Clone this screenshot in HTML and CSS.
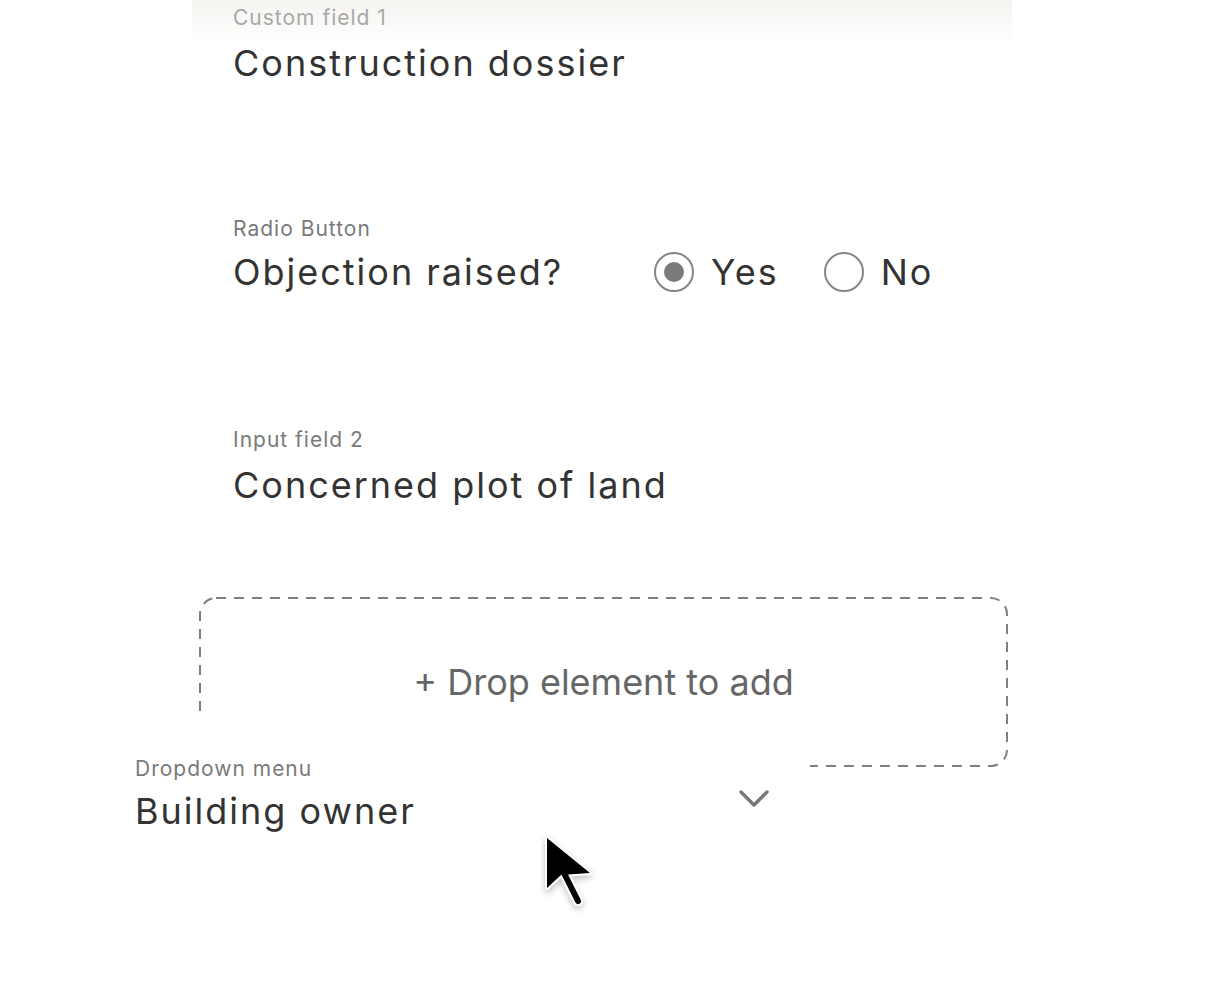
FILE: index.html
```html
<!DOCTYPE html>
<html lang="en">
<head>
<meta charset="utf-8">
<title>Form builder</title>
<link rel="stylesheet" href="styles.css">
</head>
<body>
<div class="canvas">
  <div class="form">
    <div class="fade"></div>
    <div class="field">
      <div class="label label-faded">Custom field 1</div>
      <div class="value">Construction dossier</div>
    </div>
    <div class="field">
      <div class="label">Radio Button</div>
      <div class="value row">
        <span class="question">Objection raised?</span>
        <span class="radio-group">
          <span class="option"><span class="radio checked"></span>Yes</span>
          <span class="option"><span class="radio"></span>No</span>
        </span>
      </div>
    </div>
    <div class="field">
      <div class="label">Input field 2</div>
      <div class="value">Concerned plot of land</div>
    </div>
    <div class="dropzone">
      <svg class="dash" width="100%" height="100%" preserveAspectRatio="none">
        <rect x="1" y="1" width="807" height="168" rx="16" ry="16" fill="none" stroke="#7f7f7f" stroke-width="2" stroke-dasharray="10 8"/>
      </svg>
      <span class="drop-text">+ Drop element to add</span>
    </div>
  </div>

  <div class="drag-card">
    <div class="label">Dropdown menu</div>
    <div class="value drop-row">
      <span>Building owner</span>
      <svg class="chevron" width="32" height="20" viewBox="0 0 32 20"><polyline points="3,3 16,16 29,3" fill="none" stroke="#787878" stroke-width="3.4" stroke-linecap="round" stroke-linejoin="round"/></svg>
    </div>
  </div>

  <svg class="cursor" width="70" height="90" viewBox="0 0 70 90">
    <defs>
      <filter id="sh" x="-50%" y="-50%" width="200%" height="200%">
        <feDropShadow dx="0" dy="3" stdDeviation="3" flood-color="#000" flood-opacity="0.25"/>
      </filter>
    </defs>
    <g filter="url(#sh)">
      <line x1="25" y1="45" x2="38" y2="71" stroke="#fff" stroke-width="10" stroke-linecap="round"/>
      <path d="M7 8 L7 58 L21 45 L50 43 Z" fill="#fff" stroke="#fff" stroke-width="4" stroke-linejoin="round"/>
      <line x1="25" y1="45" x2="38" y2="71" stroke="#000" stroke-width="6" stroke-linecap="round"/>
      <path d="M7 8 L7 58 L21 45 L50 43 Z" fill="#000"/>
    </g>
  </svg>
</div>
</body>
</html>
```

FILE: styles.css
```css
html, body {
  margin: 0;
  padding: 0;
  background: #ffffff;
}

body {
  font-family: Inter, "Noto Sans", "Liberation Sans", sans-serif;
  color: #333333;
}

.canvas {
  position: relative;
  width: 1215px;
  height: 1000px;
  overflow: hidden;
}

.form {
  position: relative;
  width: 820px;
  margin-left: 192px;
  padding-top: 6px;
  display: flex;
  flex-direction: column;
}

.fade {
  position: absolute;
  left: 0;
  top: 0;
  width: 820px;
  height: 46px;
  background: linear-gradient(to bottom, rgba(242, 240, 236, 0.75), rgba(255, 255, 255, 0));
  pointer-events: none;
}

.field {
  position: relative;
  padding-left: 41px;
  margin-bottom: 132px;
}

.field:nth-child(3) {
  margin-bottom: 134px;
}

.label {
  font-size: 21px;
  line-height: 24px;
  color: #7a7a7a;
  letter-spacing: 1px;
}

.label-faded {
  color: #a8a8a8;
}

.value {
  margin-top: 11px;
  font-size: 36px;
  line-height: 44px;
  letter-spacing: 2px;
  color: #333333;
}

.row {
  margin-top: 9px;
  display: flex;
  align-items: center;
}

.question {
  width: 421px;
}

.radio-group {
  display: flex;
  align-items: center;
  gap: 45px;
}

.option {
  display: flex;
  align-items: center;
  gap: 17px;
}

.radio {
  box-sizing: border-box;
  width: 40px;
  height: 40px;
  border: 2px solid #858585;
  border-radius: 50%;
  display: flex;
  align-items: center;
  justify-content: center;
}

.radio.checked::after {
  content: "";
  width: 20px;
  height: 20px;
  border-radius: 50%;
  background: #7a7a7a;
}

.dropzone {
  position: relative;
  margin: -42px 4px 0 7px;
  height: 170px;
  display: flex;
  align-items: center;
  justify-content: center;
}

.dash {
  position: absolute;
  left: 0;
  top: 0;
}

.drop-text {
  position: relative;
  font-size: 36px;
  line-height: 44px;
  color: #666666;
}

.drag-card {
  position: absolute;
  left: 95px;
  top: 715px;
  width: 675px;
  height: 170px;
  padding: 42px 0 0 40px;
  background: #ffffff;
}

.drag-card .value {
  margin-top: 8px;
}

.drop-row {
  display: flex;
  align-items: center;
  justify-content: space-between;
}

.chevron {
  margin-top: -24px;
  margin-right: 40px;
}

.cursor {
  position: absolute;
  left: 540px;
  top: 830px;
}
```
